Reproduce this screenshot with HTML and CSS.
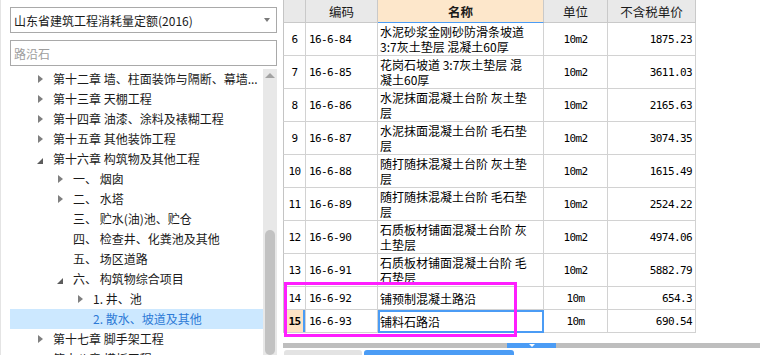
FILE: index.html
```html
<!DOCTYPE html>
<html lang="zh-CN">
<head>
    <meta charset="UTF-8">
    <meta name="viewport" content="width=device-width, initial-scale=1.0">
    <title>定额库</title>
    <link rel="stylesheet" href="styles.css">
</head>
<body>
    <div class="app">
        <div class="side">
            <div class="select-box">
                <span>山东省建筑工程消耗量定额(2016)</span>
                <i class="caret"></i>
            </div>
            <div class="search-box">路沿石</div>

            <div class="tree-wrap">
                <ul class="tree">
                    <li class="node lv1"><i class="tri closed"></i>第十二章 墙、柱面装饰与隔断、幕墙...</li>
                    <li class="node lv1"><i class="tri closed"></i>第十三章 天棚工程</li>
                    <li class="node lv1"><i class="tri closed"></i>第十四章 油漆、涂料及裱糊工程</li>
                    <li class="node lv1"><i class="tri closed"></i>第十五章 其他装饰工程</li>
                    <li class="node lv1"><i class="tri open"></i>第十六章 构筑物及其他工程</li>
                    <li class="node lv2"><i class="tri closed"></i>一、 烟囱</li>
                    <li class="node lv2"><i class="tri closed"></i>二、 水塔</li>
                    <li class="node lv2"><i class="tri"></i>三、 贮水(油)池、贮仓</li>
                    <li class="node lv2"><i class="tri"></i>四、 检查井、化粪池及其他</li>
                    <li class="node lv2"><i class="tri"></i>五、 场区道路</li>
                    <li class="node lv2"><i class="tri open"></i>六、 构筑物综合项目</li>
                    <li class="node lv3"><i class="tri closed"></i>1. 井、池</li>
                    <li class="node lv3 active"><i class="tri"></i>2. 散水、坡道及其他</li>
                    <li class="node lv1"><i class="tri closed"></i>第十七章 脚手架工程</li>
                    <li class="node lv1"><i class="tri closed"></i>第十八章 模板工程</li>
                </ul>
                <div class="vscroll">
                    <i class="up"></i>
                    <div class="thumb"></div>
                </div>
            </div>
        </div>

        <div class="main">
            <table class="grid">
                <colgroup>
                    <col style="width: 23px">
                    <col style="width: 72px">
                    <col style="width: 166px">
                    <col style="width: 64px">
                    <col style="width: 88px">
                </colgroup>
                <thead>
                    <tr>
                        <th></th>
                        <th>编码</th>
                        <th class="cur-col">名称</th>
                        <th>单位</th>
                        <th>不含税单价</th>
                    </tr>
                </thead>
                <tbody>
                    <tr class="two">
                        <td class="num">6</td><td class="code">16-6-84</td>
                        <td class="name">水泥砂浆金刚砂防滑条坡道<br>3:7灰土垫层 混凝土60厚</td>
                        <td class="unit">10m2</td><td class="price">1875.23</td>
                    </tr>
                    <tr class="two">
                        <td class="num">7</td><td class="code">16-6-85</td>
                        <td class="name">花岗石坡道 3:7灰土垫层 混<br>凝土60厚</td>
                        <td class="unit">10m2</td><td class="price">3611.03</td>
                    </tr>
                    <tr class="two">
                        <td class="num">8</td><td class="code">16-6-86</td>
                        <td class="name">水泥抹面混凝土台阶 灰土垫<br>层</td>
                        <td class="unit">10m2</td><td class="price">2165.63</td>
                    </tr>
                    <tr class="two">
                        <td class="num">9</td><td class="code">16-6-87</td>
                        <td class="name">水泥抹面混凝土台阶 毛石垫<br>层</td>
                        <td class="unit">10m2</td><td class="price">3074.35</td>
                    </tr>
                    <tr class="two">
                        <td class="num">10</td><td class="code">16-6-88</td>
                        <td class="name">随打随抹混凝土台阶 灰土垫<br>层</td>
                        <td class="unit">10m2</td><td class="price">1615.49</td>
                    </tr>
                    <tr class="two">
                        <td class="num">11</td><td class="code">16-6-89</td>
                        <td class="name">随打随抹混凝土台阶 毛石垫<br>层</td>
                        <td class="unit">10m2</td><td class="price">2524.22</td>
                    </tr>
                    <tr class="two">
                        <td class="num">12</td><td class="code">16-6-90</td>
                        <td class="name">石质板材铺面混凝土台阶 灰<br>土垫层</td>
                        <td class="unit">10m2</td><td class="price">4974.06</td>
                    </tr>
                    <tr class="two">
                        <td class="num">13</td><td class="code">16-6-91</td>
                        <td class="name">石质板材铺面混凝土台阶 毛<br>石垫层</td>
                        <td class="unit">10m2</td><td class="price">5882.79</td>
                    </tr>
                    <tr class="one">
                        <td class="num">14</td><td class="code">16-6-92</td>
                        <td class="name">铺预制混凝土路沿</td>
                        <td class="unit">10m</td><td class="price">654.3</td>
                    </tr>
                    <tr class="one sel">
                        <td class="num">15</td><td class="code">16-6-93</td>
                        <td class="name focus">铺料石路沿</td>
                        <td class="unit">10m</td><td class="price">690.54</td>
                    </tr>
                </tbody>
            </table>

            <div class="mark"></div>

            <div class="hscroll">
                <div class="hthumb"><i></i></div>
            </div>
            <div class="tabs">
                <span class="tab"></span>
                <span class="tab on"></span>
            </div>
        </div>
    </div>
</body>
</html>
```

FILE: styles.css
```css
* { margin: 0; padding: 0; box-sizing: border-box; }
body {
    width: 760px;
    height: 355px;
    overflow: hidden;
    background: #fff;
    color: #1a1a1a;
    font-family: "Noto Sans CJK SC", "Noto Sans", sans-serif;
    font-size: 12px;
}
.app { display: flex; height: 355px; }

/* left panel */
.side {
    width: 277px;
    flex-shrink: 0;
    padding: 7px 0 0 9px;
    border-left: 1px solid #e4e4e4;
    display: flex;
    flex-direction: column;
}
.select-box, .search-box {
    width: 267px;
    height: 26px;
    border: 1px solid #a9a9a9;
    padding-left: 3px;
    display: flex;
    align-items: center;
    white-space: nowrap;
}
.select-box { justify-content: space-between; }
.caret {
    width: 0;
    height: 0;
    margin-right: 6px;
    border-top: 4px solid #7a7a7a;
    border-left: 3px solid transparent;
    border-right: 3px solid transparent;
}
.search-box { margin-top: 7px; color: #9e9e9e; }

.tree-wrap {
    margin-top: 3px;
    flex: 1;
    display: flex;
    overflow: hidden;
}
.tree {
    list-style: none;
    width: 253px;
    flex-shrink: 0;
}
.node {
    height: 20px;
    line-height: 20px;
    display: flex;
    align-items: center;
    white-space: nowrap;
    overflow: hidden;
}
.lv1 { padding-left: 25px; }
.lv2 { padding-left: 45px; }
.lv3 { padding-left: 65px; }
.node.active { background: #cce8ff; color: #2d7ad6; }

.tri { width: 18px; height: 20px; flex-shrink: 0; display: flex; align-items: center; }
.tri.closed::before {
    content: "";
    margin-left: 3px;
    border-left: 5px solid #7f7f7f;
    border-top: 4px solid transparent;
    border-bottom: 4px solid transparent;
}
.tri.open::before {
    content: "";
    margin: 3px 0 0 2px;
    border-bottom: 6px solid #5c5c5c;
    border-left: 6px solid transparent;
}

.vscroll {
    width: 14px;
    flex-shrink: 0;
    background: #e8e8e8;
    display: flex;
    flex-direction: column;
    align-items: center;
}
.up {
    margin-top: 4px;
    width: 0;
    height: 0;
    border-bottom: 5px solid #a3a3a3;
    border-left: 5px solid transparent;
    border-right: 5px solid transparent;
}
.thumb {
    margin-top: 152px;
    width: 10px;
    height: 200px;
    border-radius: 5px;
    background: #c2c2c2;
}

/* grid */
.main {
    flex: 1;
    position: relative;
    padding-left: 6px;
}
.grid {
    border-collapse: separate;
    border-spacing: 0;
    table-layout: fixed;
    width: 413px;
    font-size: 12px;
    color: #000;
}
.grid th, .grid td {
    border-right: 1px solid #d2d2d2;
    border-bottom: 1px solid #d2d2d2;
    padding: 0;
    overflow: hidden;
    white-space: nowrap;
}
.grid th:first-child, .grid td:first-child { border-left: 1px solid #c4c4c4; }
.grid thead tr { height: 23px; }
.grid th {
    background: #e9e9e9;
    border-color: #c9c9c9;
    font-weight: normal;
    font-size: 12.5px;
    color: #1a1a1a;
}
.grid th.cur-col {
    background: #fde7cb;
    font-weight: bold;
    border-bottom: 1px solid #4b9cf5;
}
tr.two { height: 33px; }
tr.one { height: 23px; }

.num, .code, .unit, .price {
    font-family: "DejaVu Sans Mono", "Liberation Mono", monospace;
    font-size: 11px;
    letter-spacing: -0.6px;
}
.num { text-align: center; }
.code { padding-left: 3px !important; }
.name { padding: 0 2px !important; line-height: 15px; }
.unit { text-align: center; }
.price { text-align: right; padding-right: 3px !important; }

.sel .num {
    background: #fde3c4;
    font-weight: bold;
    box-shadow: inset -2px 0 0 #4b9cf5;
}
.focus { outline: 2px solid #4b9cf5; outline-offset: -2px; }

/* annotation box */
.mark {
    position: absolute;
    left: 7px;
    top: 282px;
    width: 233px;
    height: 55px;
    border: 3px solid #ff1eff;
}

.hscroll {
    margin-top: 10px;
    height: 5px;
    background: #bebebe;
    display: flex;
}
.hthumb {
    margin-left: 224px;
    width: 49px;
    height: 5px;
    background: #4b9cf5;
    display: flex;
    justify-content: center;
    padding-top: 1px;
}
.hthumb i {
    width: 0;
    height: 0;
    border-top: 3px solid #fff;
    border-left: 3px solid transparent;
    border-right: 3px solid transparent;
}
.tabs {
    margin-top: 2px;
    display: flex;
    gap: 2px;
    padding-left: 1px;
}
.tab {
    width: 78px;
    height: 10px;
    background: #e3e3e3;
    border-radius: 3px 3px 0 0;
}
.tab.on { width: 150px; background: #4b9cf5; }
```
